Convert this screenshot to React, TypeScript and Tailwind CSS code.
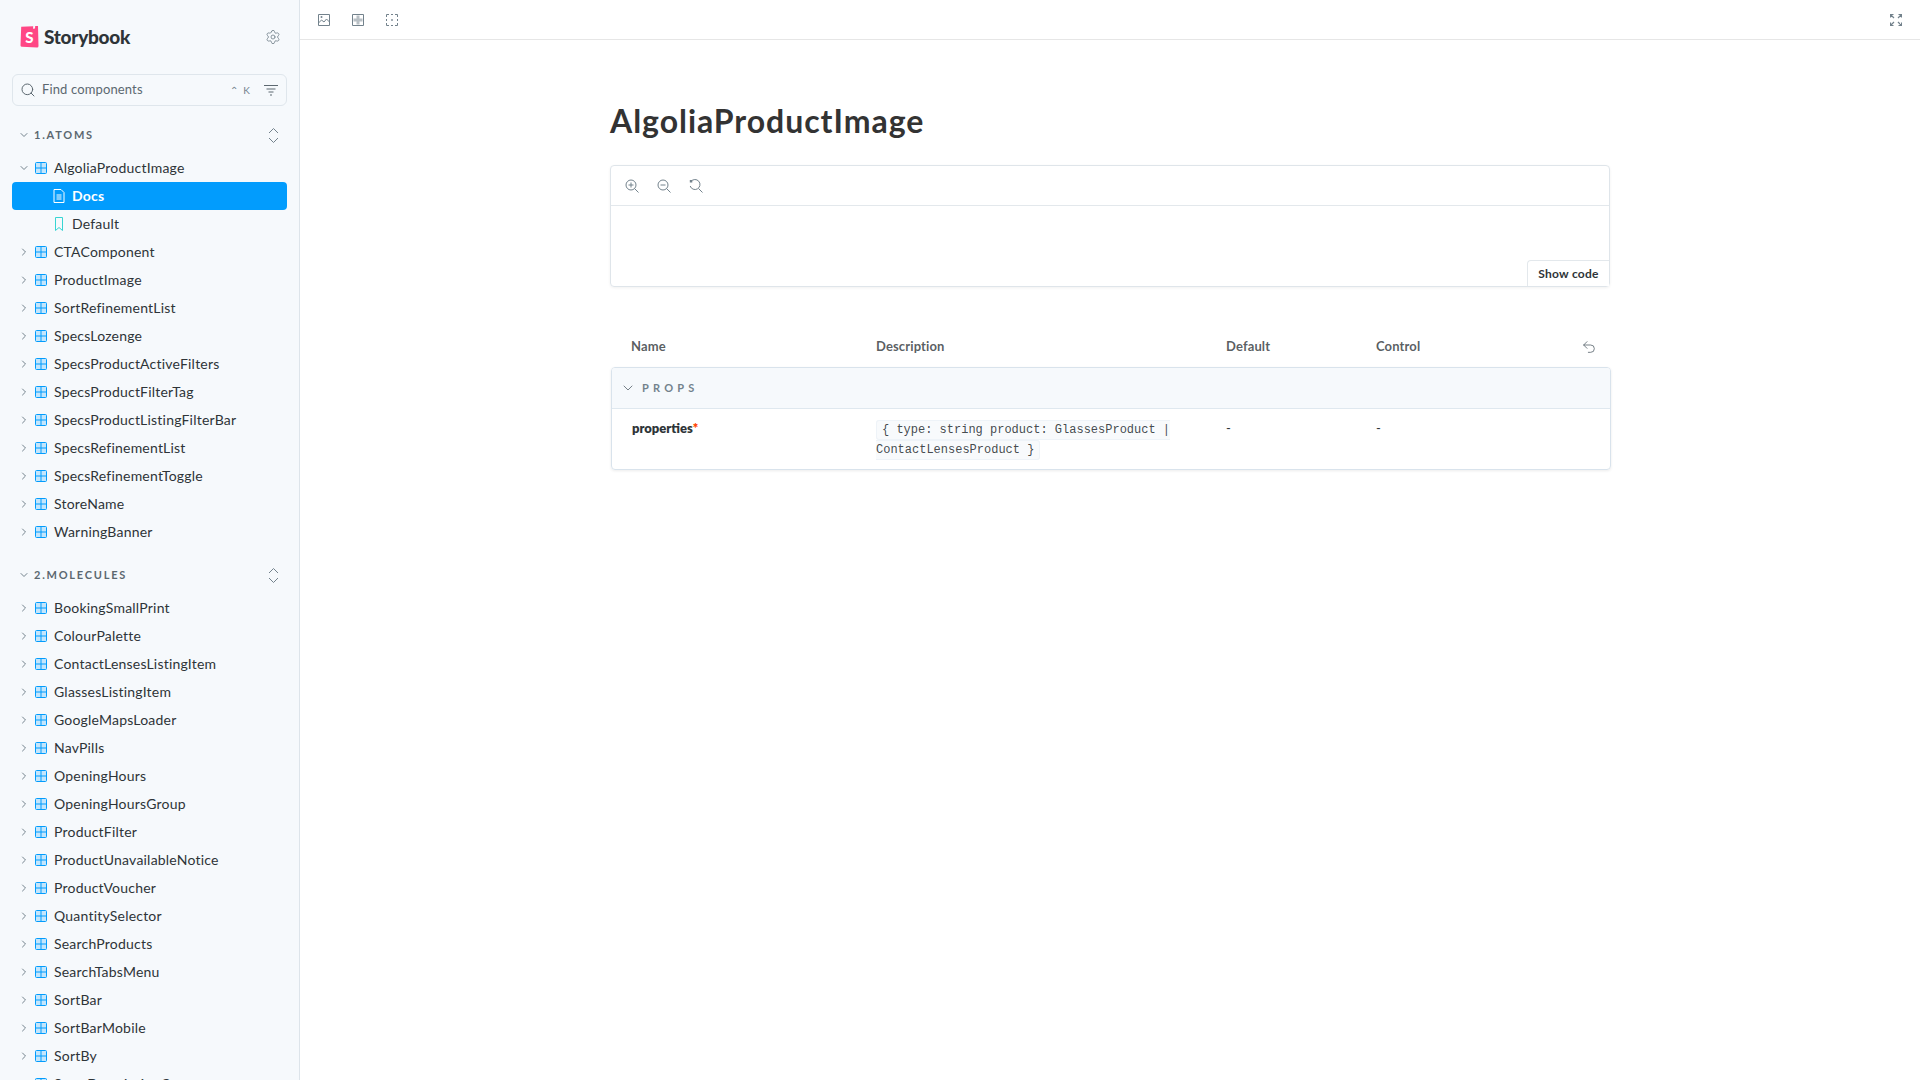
import { ChevronDown, ChevronRight, Search, Settings, Undo2 } from 'lucide-react';

const atoms = [
  'CTAComponent',
  'ProductImage',
  'SortRefinementList',
  'SpecsLozenge',
  'SpecsProductActiveFilters',
  'SpecsProductFilterTag',
  'SpecsProductListingFilterBar',
  'SpecsRefinementList',
  'SpecsRefinementToggle',
  'StoreName',
  'WarningBanner',
];

const molecules = [
  'BookingSmallPrint',
  'ColourPalette',
  'ContactLensesListingItem',
  'GlassesListingItem',
  'GoogleMapsLoader',
  'NavPills',
  'OpeningHours',
  'OpeningHoursGroup',
  'ProductFilter',
  'ProductUnavailableNotice',
  'ProductVoucher',
  'QuantitySelector',
  'SearchProducts',
  'SearchTabsMenu',
  'SortBar',
  'SortBarMobile',
  'SortBy',
  'StoreDescriptionContent',
];

function ComponentIcon() {
  return (
    <svg width="14" height="14" viewBox="0 0 14 14" className="shrink-0">
      <rect x="1.500" y="1.500" width="11" height="11" rx="1.500" fill="#029cfd" fillOpacity="0.2" />
      <path
        d="M2.500 1.500h9a1 1 0 0 1 1 1v9a1 1 0 0 1-1 1h-9a1 1 0 0 1-1-1v-9a1 1 0 0 1 1-1ZM7 1.500v11M1.500 7h11"
        fill="none"
        stroke="#029cfd"
        strokeWidth="1"
      />
    </svg>
  );
}

function TreeRow({ name, open }: { name: string; open?: boolean }) {
  return (
    <div className="flex h-7 shrink-0 items-center pl-[18px] text-sm tracking-[0.015em] text-[#2e3438]">
      {open ? (
        <ChevronDown className="mr-1 h-3 w-3 shrink-0 text-[#73828c]" />
      ) : (
        <ChevronRight className="mr-1 h-3 w-3 shrink-0 text-[#73828c]" />
      )}
      <ComponentIcon />
      <span className="ml-[6px] whitespace-nowrap">{name}</span>
    </div>
  );
}

function SectionHeading({ label }: { label: string }) {
  return (
    <div className="flex h-7 shrink-0 items-center justify-between pr-5 pl-[18px]">
      <div className="flex items-center">
        <ChevronDown className="mr-[4px] h-3 w-3 text-[#73828c]" />
        <span className="text-[11px] font-bold tracking-[0.16em] text-[#5c6870]">{label}</span>
      </div>
      <svg width="11" height="15" viewBox="0 0 11 15" fill="none" stroke="#73828c">
        <path d="M1 5l4.500-4.500L10 5M1 10l4.500 4.500L10 10" />
      </svg>
    </div>
  );
}

function Sidebar() {
  return (
    <aside className="flex h-full w-[300px] shrink-0 flex-col overflow-hidden border-r border-[#dde4ea] bg-[#f6f9fc]">
      <div className="flex h-[74px] shrink-0 items-center justify-between pr-[18px] pl-5">
        <div className="flex items-center gap-[5px]">
          <svg width="19" height="22" viewBox="0 0 19 22">
            <path
              d="M1.200 0.800 L13.200 0.200 L13 2.800 L15 2.600 L15.200 0 L18 0 L18.500 20 Q18.500 21.600 17 21.500 L2 20.800 Q0.600 20.700 0.500 19.400 Z"
              fill="#ff4785"
            />
            <text x="9.500" y="16.500" textAnchor="middle" fontSize="15" fontWeight="900" fill="#fff" fontFamily="Lato, sans-serif">
              S
            </text>
          </svg>
          <span className="text-[19px] font-black tracking-[-0.015em] text-[#2e3438]">Storybook</span>
        </div>
        <Settings className="h-4 w-4 text-[#73828c]" strokeWidth={1.25} />
      </div>

      <div className="mx-3 flex h-8 shrink-0 items-center rounded-md border border-[#dfe6ec] pr-2 pl-[7px] text-[13px] text-[#5c6870]">
        <Search className="h-4 w-4 text-[#5c6870]" strokeWidth={1.5} />
        <span className="ml-[6px] flex-1 tracking-[0.01em]">Find components</span>
        <span className="mr-[13px] text-[10px] tracking-[0.12em] text-[#73828c]">⌃ K</span>
        <svg width="14" height="12" viewBox="0 0 14 12" fill="none" stroke="#5c6870">
          <path d="M0 1.500h14M2.500 5h9M4.500 8h5M6 11h2" />
        </svg>
      </div>

      <div className="mt-[15px] shrink-0">
        <SectionHeading label="1.ATOMS" />
        <div className="mt-[5px]">
          <TreeRow name="AlgoliaProductImage" open />
          <div className="mx-3 flex h-7 items-center rounded bg-[#029cfd] pl-[41px] text-sm font-bold tracking-[0.015em] text-white">
            <svg width="14" height="14" viewBox="0 0 14 14" fill="none" stroke="#fff" className="mr-[6px] -ml-[1px]">
              <path d="M2 0.500h7l3 3v10h-10ZM4.500 6h5M4.500 8h5M4.500 10h5" />
            </svg>
            Docs
          </div>
          <div className="flex h-7 items-center pl-[53px] text-sm tracking-[0.015em] text-[#2e3438]">
            <svg width="14" height="14" viewBox="0 0 14 14" fill="none" stroke="#37d5d3" className="mr-[6px] -ml-[1px]">
              <path d="M3.500 0.500h7v13l-3.500-3-3.500 3Z" />
            </svg>
            Default
          </div>
          {atoms.map((name) => (
            <TreeRow key={name} name={name} />
          ))}
        </div>
      </div>

      <div className="mt-[15px] shrink-0">
        <SectionHeading label="2.MOLECULES" />
        <div className="mt-[5px]">
          {molecules.map((name) => (
            <TreeRow key={name} name={name} />
          ))}
        </div>
      </div>
    </aside>
  );
}

function Toolbar() {
  return (
    <div className="flex h-10 shrink-0 items-center justify-between border-b border-[#e6e6e6] px-[18px]">
      <div className="flex items-center gap-[22px]">
        <svg width="12" height="12" viewBox="0 0 12 12" fill="none" stroke="#73828c">
          <path d="M0.500 0.500h11v11h-11ZM0.500 9l3-3 2.500 2 2.500-3 3 3" />
          <circle cx="3.500" cy="3" r="1" fill="#73828c" stroke="none" />
        </svg>
        <svg width="12" height="12" viewBox="0 0 12 12" fill="none" stroke="#73828c">
          <path d="M0.500 0.500h11v11h-11Z" />
          <path d="M6 1.500v9M1.500 6h9" stroke="#73828c" strokeOpacity="0.5" strokeWidth="3" />
        </svg>
        <svg width="12" height="12" viewBox="0 0 12 12" fill="none" stroke="#73828c">
          <path d="M0.500 3V0.500H3M5 0.500h2M9 0.500h2.500V3M11.500 5v2M11.500 9v2.500H9M7 11.500H5M3 11.500H0.500V9M0.500 7V5" />
          <rect x="5.200" y="5.200" width="1.600" height="1.600" fill="#73828c" stroke="none" />
        </svg>
      </div>
      <svg width="12" height="12" viewBox="0 0 12 12" fill="none" stroke="#73828c" strokeWidth="1.200">
        <path d="M0.500 3.500v-3h3M0.500 0.500l3.500 3.500M8.500 0.500h3v3M11.500 0.500l-3.500 3.500M0.500 8.500v3h3M0.500 11.500l3.500-3.500M8.500 11.500h3v-3M11.500 11.500l-3.500-3.500" />
      </svg>
    </div>
  );
}

function ZoomTools() {
  return (
    <div className="flex h-10 items-center gap-[18px] border-b border-[#e3e8ec] pl-[14px]">
      <svg width="14" height="14" viewBox="0 0 14 14" fill="none" stroke="#73828c">
        <circle cx="6" cy="6" r="5" />
        <path d="M9.500 9.500l4 4M3.500 6h5M6 3.500v5" />
      </svg>
      <svg width="14" height="14" viewBox="0 0 14 14" fill="none" stroke="#73828c">
        <circle cx="6" cy="6" r="5" />
        <path d="M9.500 9.500l4 4M3.500 6h5" />
      </svg>
      <svg width="14" height="14" viewBox="0 0 14 14" fill="none" stroke="#73828c">
        <path d="M2 2.500A5 5 0 1 1 1.200 7M9.500 9.500l4 4" />
        <rect x="0.800" y="1" width="2.500" height="2.500" fill="#73828c" stroke="none" />
      </svg>
    </div>
  );
}

function ArgsTable() {
  return (
    <div className="mt-10">
      <div className="grid h-[40px] grid-cols-[245px_350px_150px_1fr] items-center pr-[13px] pl-[21px] text-[13px] font-bold tracking-[0.01em] text-[#2e3438]/80">
        <span>Name</span>
        <span>Description</span>
        <span>Default</span>
        <div className="flex items-center justify-between">
          <span>Control</span>
          <Undo2 className="h-4 w-4 text-[#5c6870]" strokeWidth={1.25} />
        </div>
      </div>
      <div className="-mr-[1px] ml-[1px] overflow-hidden rounded border border-[#d9e3ec] shadow-[0_1px_3px_rgba(0,0,0,0.08)]">
        <div className="flex h-[41px] items-center border-b border-[#dfe8ef] bg-[#f6f9fc] pl-2">
          <ChevronDown className="h-4 w-4 text-[#5c6870]" strokeWidth={1.25} />
          <span className="ml-[6px] text-[11px] font-bold tracking-[0.38em] text-[#73828c]">PROPS</span>
        </div>
        <div className="grid h-[60px] grid-cols-[244px_350px_150px_1fr] pt-[10px] pl-[20px] text-[13px] text-[#2e3438]">
          <div className="font-extrabold">
            properties<span className="text-[#ff4400]">*</span>
          </div>
          <div className="pt-[1px] pr-[50px] font-['Liberation_Mono',monospace] text-xs leading-[20px] text-[#2e3438]/90">
            <code className="rounded-[3px] border border-[#eef3f8] bg-[#f8fafc] px-[5px] py-[2px]">
              {'{ type: string product: GlassesProduct | ContactLensesProduct }'}
            </code>
          </div>
          <div>-</div>
          <div>-</div>
        </div>
      </div>
    </div>
  );
}

export default function App() {
  return (
    <div className="flex h-screen w-full overflow-hidden bg-white font-['Lato',sans-serif]">
      <Sidebar />
      <main className="flex min-w-0 flex-1 flex-col">
        <Toolbar />
        <div className="mx-auto w-[1000px] pt-[61px]">
          <h1 className="text-[32px] leading-10 font-bold tracking-[0.03em] text-[#333333]">AlgoliaProductImage</h1>
          <div className="relative mt-[24px] h-[122px] rounded border border-[#dfe5ea] shadow-[0_1px_3px_rgba(0,0,0,0.06)]">
            <ZoomTools />
            <button className="absolute right-0 bottom-0 flex h-[26px] w-[82px] items-center justify-center rounded-tl border-t border-l border-[#e3e8ec] bg-white text-xs font-bold tracking-[0.02em] text-[#2e3438]">
              Show code
            </button>
          </div>
          <ArgsTable />
        </div>
      </main>
    </div>
  );
}
